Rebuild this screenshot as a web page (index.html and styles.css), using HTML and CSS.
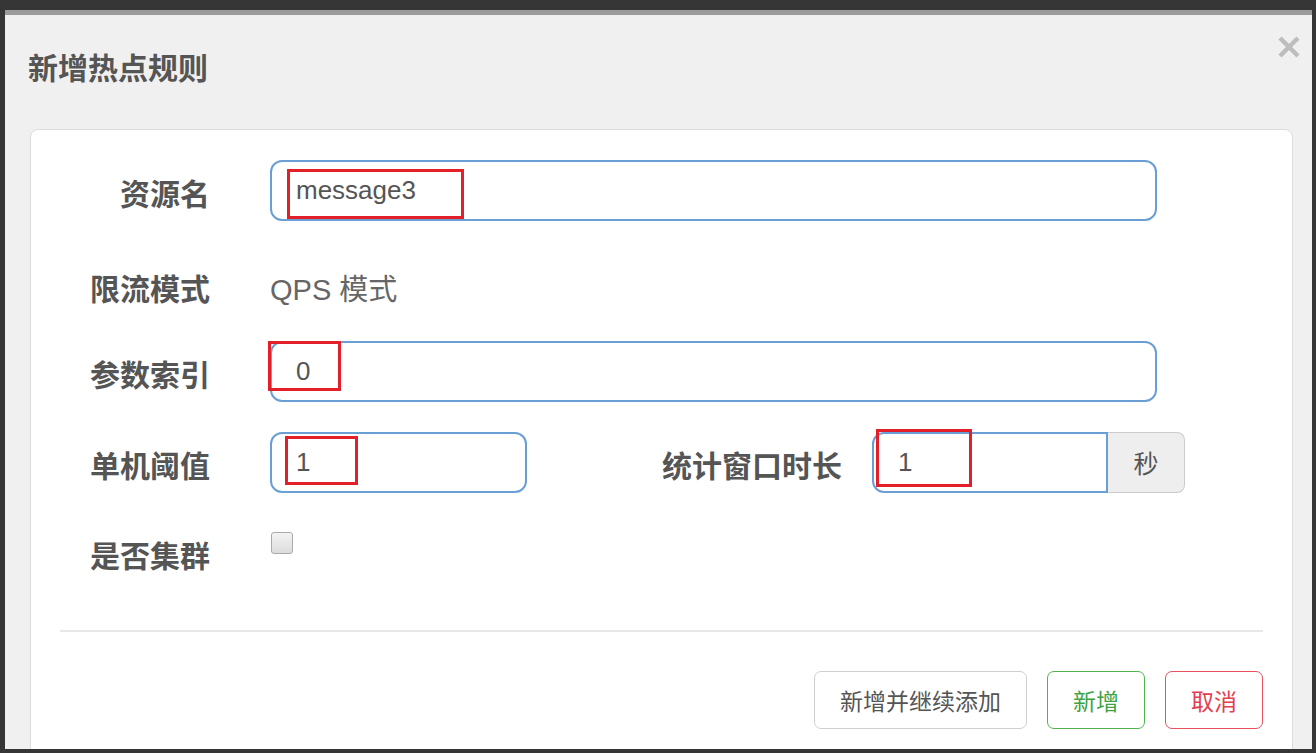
FILE: index.html
```html
<!DOCTYPE html>
<html lang="zh-CN">
<head>
<meta charset="UTF-8" />
<meta name="viewport" content="width=device-width, initial-scale=1" />
<title>新增热点规则</title>
<link rel="stylesheet" href="styles.css">
</head>
<body>

<div class="modal">
  <div class="modal-header">
    <h4 class="modal-title">新增热点规则</h4>
    <button class="close" type="button" aria-label="关闭">
      <svg width="24" height="24" viewBox="0 0 24 24"><path d="M3 3 L21 21 M21 3 L3 21" stroke="#bdbdbd" stroke-width="4.5" stroke-linecap="butt" fill="none"/></svg>
    </button>
  </div>

  <div class="panel">
    <form class="form">
      <div class="row">
        <label class="label">资源名</label>
        <div class="field wide">
          <input class="input" type="text" value="message3">
          <span class="mark mark-name"></span>
        </div>
      </div>

      <div class="row">
        <label class="label label-static">限流模式</label>
        <p class="static">QPS 模式</p>
      </div>

      <div class="row">
        <label class="label">参数索引</label>
        <div class="field wide">
          <input class="input" type="text" value="0">
          <span class="mark mark-index"></span>
        </div>
      </div>

      <div class="row">
        <label class="label">单机阈值</label>
        <div class="field short">
          <input class="input" type="text" value="1">
          <span class="mark mark-count"></span>
        </div>
        <label class="label label-mid">统计窗口时长</label>
        <div class="field group">
          <input class="input input-left" type="text" value="1">
          <span class="addon">秒</span>
          <span class="mark mark-window"></span>
        </div>
      </div>

      <div class="row row-last">
        <label class="label">是否集群</label>
        <input class="check" type="checkbox">
      </div>
    </form>

    <hr class="divider">

    <div class="footer">
      <button class="btn" type="button">新增并继续添加</button>
      <button class="btn btn-ok" type="button">新增</button>
      <button class="btn btn-cancel" type="button">取消</button>
    </div>
  </div>
</div>

</body>
</html>
```

FILE: styles.css
```css
html, body { margin: 0; height: 753px; overflow: hidden; }
body {
  background: #363636;
  font-family: "Liberation Sans", "Noto Sans CJK SC", sans-serif;
  color: #555;
}

.modal {
  box-sizing: border-box; width: 1307px; height: 739px;
  margin: 10px 0 0 5px; overflow: hidden;
  background: #f0f0f0; border-top: 5px solid #9b9b9b;
}

.modal-header {
  box-sizing: border-box; height: 114px;
  display: flex; align-items: flex-start;
  padding: 20px 11px 0 23px;
}
.modal-title {
  margin: 14px 0 0; font-size: 30px; line-height: 40px; font-weight: bold; color: #555;
}
.close {
  margin-left: auto; padding: 0; border: 0; background: none;
  width: 24px; height: 24px; cursor: pointer;
}
.close svg { display: block; }

.panel {
  box-sizing: border-box; width: 1263px; margin-left: 25px; height: 700px;
  background: #fff; border: 1px solid #dcdcdc; border-radius: 8px;
  padding-top: 30px;
}

.row { display: flex; align-items: flex-start; height: 61px; margin-bottom: 29.5px; }
.row-last { margin-bottom: 0; }

.label {
  box-sizing: border-box; width: 179px; margin-right: 60px; padding-top: 15px;
  text-align: right; font-size: 30px; line-height: 40px; font-weight: bold; color: #555;
}
.label-static { padding-top: 19px; }
.label-mid { width: 315px; margin-right: 30px; }

.static { margin: 0; padding-top: 19px; font-size: 29px; line-height: 40px; color: #666; }

.field { position: relative; height: 61px; display: flex; }
.wide { width: 887px; }
.short { width: 257px; }
.group { width: 313px; }

.input {
  box-sizing: border-box; width: 100%; height: 61px; margin: 0;
  padding: 0 0 0 24px; border: 2px solid #6a9fd5; border-radius: 12px;
  font-family: "Liberation Sans", "Noto Sans CJK SC", sans-serif;
  font-size: 26px; color: #555; background: #fff; outline: none;
}
.input-left { width: 236px; flex: none; border-radius: 12px 0 0 12px; }

.addon {
  box-sizing: border-box; width: 77px; height: 61px;
  display: flex; align-items: center; justify-content: center;
  background: #eee; border: 1px solid #ccc; border-left: 0; border-radius: 0 8px 8px 0;
  font-size: 25px; color: #555;
}

.mark { position: absolute; border: 3px solid #e3202a; box-sizing: border-box; pointer-events: none; }
.mark-name { left: 17px; top: 9px; width: 177px; height: 50px; }
.mark-index { left: -2px; top: 0; width: 73px; height: 50px; }
.mark-count { left: 15px; top: 4px; width: 73px; height: 49px; }
.mark-window { left: 4px; top: -3px; width: 96px; height: 58px; }

.check {
  appearance: none; -webkit-appearance: none; margin: 10px 0 0 1px;
  width: 22px; height: 22px; border: 1px solid #a9a9a9; border-radius: 3px;
  background: linear-gradient(#f3f3f3, #dcdcdc);
}

.divider { margin: 47px 29px 0; border: 0; border-top: 2px solid #e8e8e8; }

.footer { display: flex; justify-content: flex-end; gap: 20px; padding: 39px 29px 0; }
.btn {
  height: 58px; padding: 0 25px; background: #fff;
  border: 1.5px solid #cfcfcf; border-radius: 7px;
  font-family: "Noto Sans CJK SC", sans-serif; font-size: 23px; color: #555; cursor: pointer;
}
.btn-ok { border-color: #4fb34f; color: #3fa345; }
.btn-cancel { border-color: #e8505e; color: #e0404f; }
```
